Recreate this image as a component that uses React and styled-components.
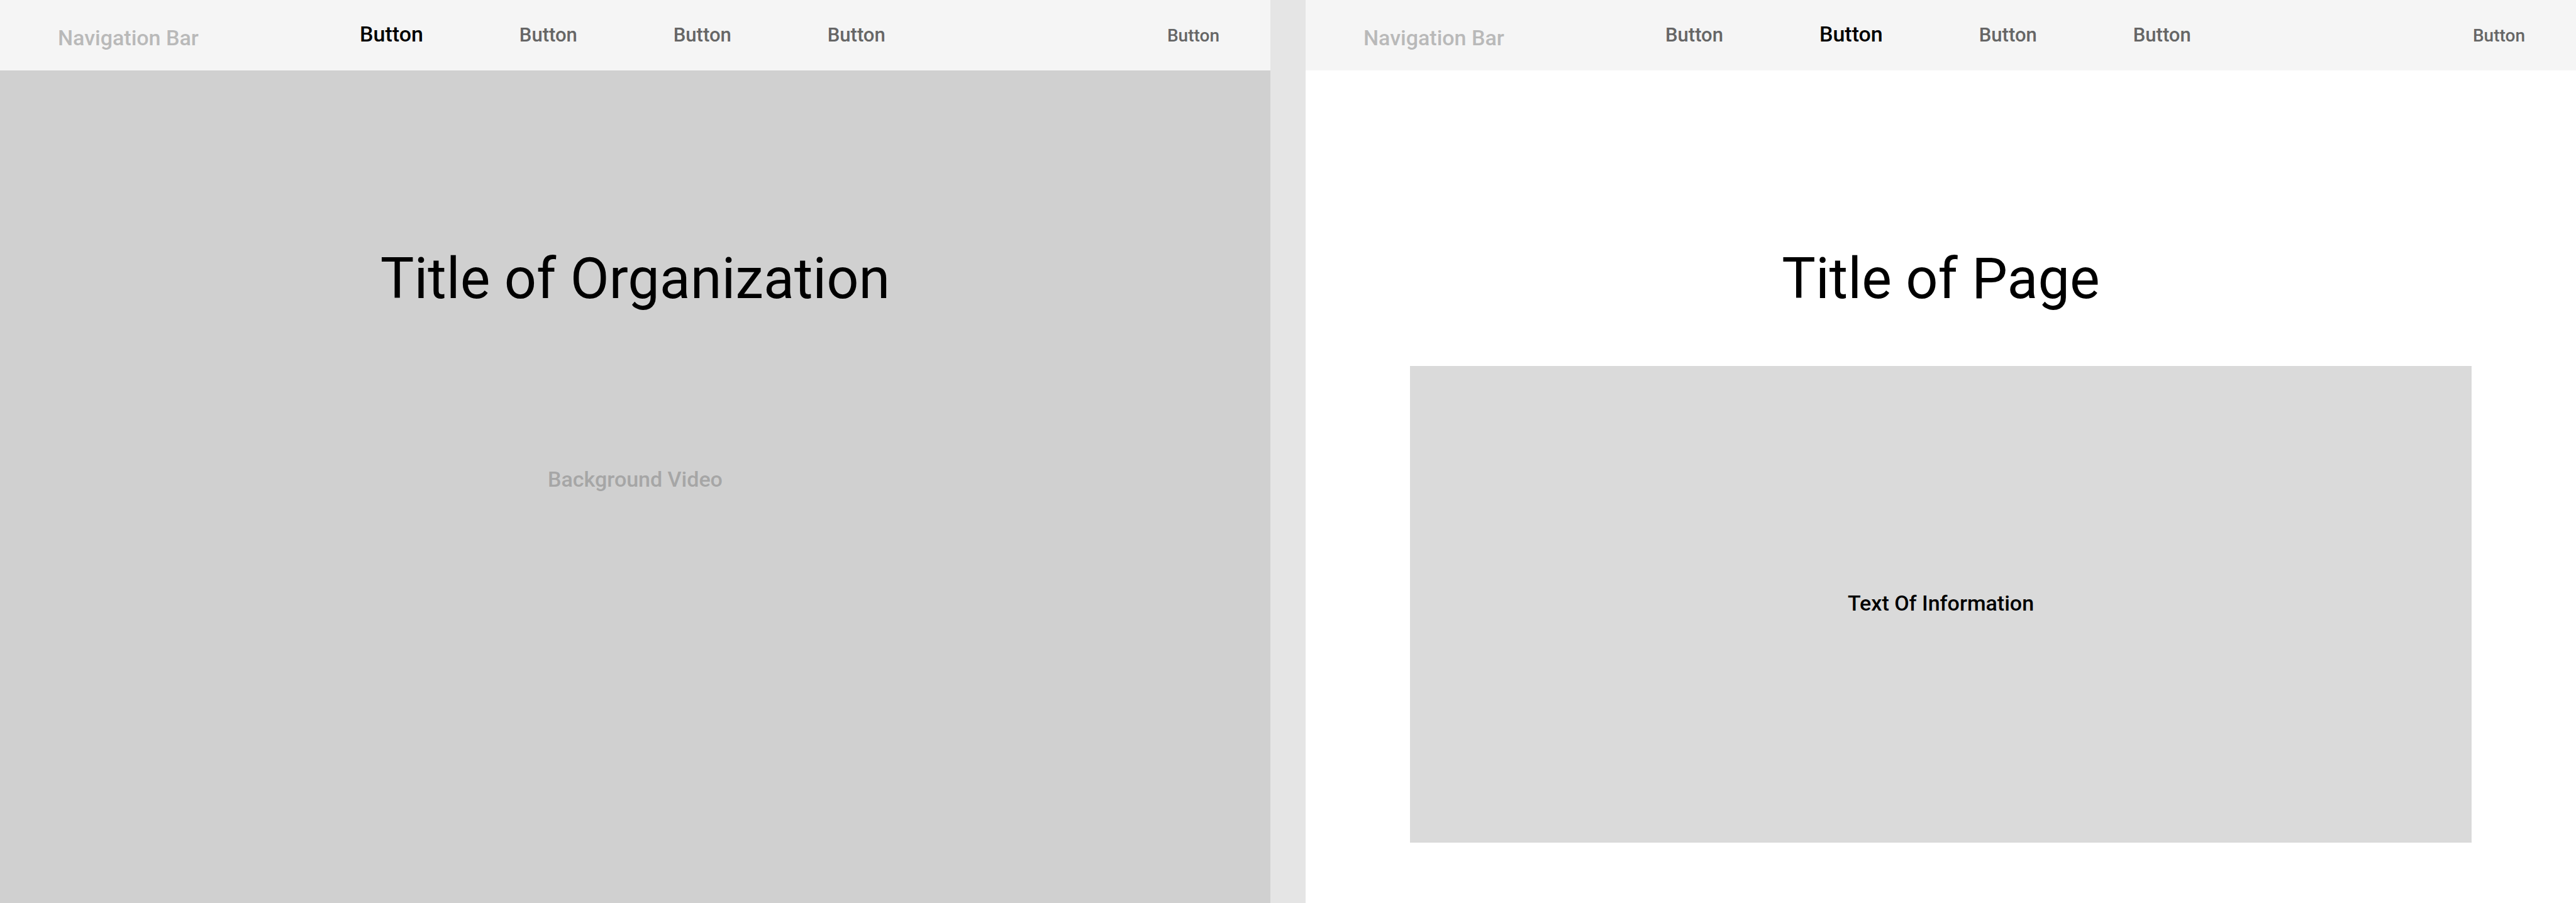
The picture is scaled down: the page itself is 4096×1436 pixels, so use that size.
import React from "react";
import styled, { createGlobalStyle } from "styled-components";

const GlobalStyle = createGlobalStyle`
  * { box-sizing: border-box; }
  body {
    margin: 0;
    background: #e5e5e5;
    color: #000;
    font-family: Roboto, "Liberation Sans", sans-serif;
    font-weight: 500;
  }
`;

const Board = styled.div`
  display: grid;
  grid-template-columns: 1fr 1fr;
  column-gap: 56px;
  min-height: 100vh;
`;

const Frame = styled.section`
  display: flex;
  flex-direction: column;
  min-width: 0;
  background: #fff;
`;

const NavBar = styled.nav`
  display: grid;
  grid-template-columns: 480px 1fr;
  align-items: start;
  min-height: 112px;
  padding: 34px 81px 0 92px;
  background: #f5f5f5;
`;

const Brand = styled.span`
  font-size: 34px;
  line-height: 52px;
  color: #b9b9b9;
`;

const NavItems = styled.div`
  display: flex;
  align-items: baseline;
  gap: 153px;
`;

const NavButton = styled.button`
  padding: 0;
  border: 0;
  background: none;
  font: inherit;
  font-size: ${(p) => (p.$active ? 34 : 31)}px;
  line-height: 40px;
  color: ${(p) => (p.$active ? "#000" : "#666")};
  cursor: pointer;
`;

const AccountButton = styled(NavButton)`
  margin-left: auto;
  font-size: 28px;
`;

const Content = styled.main`
  flex: 1;
  display: flex;
  flex-direction: column;
  padding: 278px 166px 96px;
  text-align: center;
  background: ${(p) => (p.$video ? "#d0d0d0" : "#fff")};
`;

const Title = styled.h1`
  margin: 0;
  font-size: 90px;
  line-height: 108px;
  font-weight: 400;
`;

const VideoLabel = styled.p`
  margin: 244px 0 0;
  font-size: 34px;
  line-height: 40px;
  color: #a6a6a6;
`;

const InfoPanel = styled.div`
  flex: 1;
  display: flex;
  align-items: center;
  justify-content: center;
  margin-top: 84px;
  padding-bottom: 4px;
  font-size: 34px;
  line-height: 40px;
  background: #dadada;
`;

function Navigation({ active }) {
  return (
    <NavBar>
      <Brand>Navigation Bar</Brand>
      <NavItems>
        {[0, 1, 2, 3].map((i) => (
          <NavButton
            key={i}
            type="button"
            $active={i === active}
            aria-current={i === active ? "page" : undefined}
          >
            Button
          </NavButton>
        ))}
        <AccountButton type="button">Button</AccountButton>
      </NavItems>
    </NavBar>
  );
}

export default function App() {
  return (
    <>
      <GlobalStyle />
      <Board>
        <Frame>
          <Navigation active={0} />
          <Content $video>
            <Title>Title of Organization</Title>
            <VideoLabel>Background Video</VideoLabel>
          </Content>
        </Frame>
        <Frame>
          <Navigation active={1} />
          <Content>
            <Title>Title of Page</Title>
            <InfoPanel>Text Of Information</InfoPanel>
          </Content>
        </Frame>
      </Board>
    </>
  );
}
